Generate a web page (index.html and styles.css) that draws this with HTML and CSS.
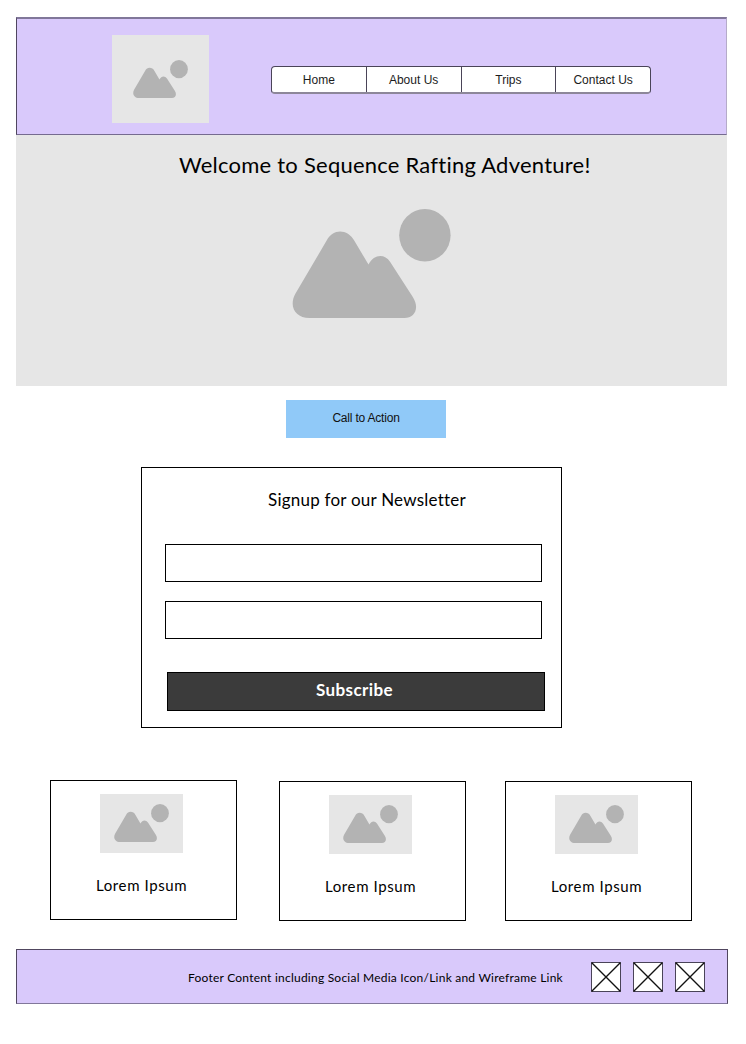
FILE: index.html
```html
<!DOCTYPE html>
<html lang="en">
<head>
<meta charset="utf-8">
<title>Sequence Rafting Adventure</title>
<link rel="stylesheet" href="styles.css">
</head>
<body>
<svg class="defs" aria-hidden="true">
  <symbol id="mountain" viewBox="0 0 159 109" preserveAspectRatio="none">
    <path d="M34.8 31.3C41 19.5 55.5 19.5 62.5 32L76.5 55.6C82 45 92.500 44.500 98.200 53L120.800 88C128 99.500 122.500 109 112.500 109H17.500C3 109-3.500 97 3.500 84.600Z"/>
    <ellipse cx="132.900" cy="26.200" rx="25.700" ry="26.200"/>
  </symbol>
</svg>
<div class="page">
  <header class="header">
    <div class="logo"><svg class="logo-icon"><use href="#mountain"/></svg></div>
    <nav class="nav">
      <a class="nav-item">Home</a>
      <a class="nav-item">About Us</a>
      <a class="nav-item">Trips</a>
      <a class="nav-item">Contact Us</a>
    </nav>
  </header>
  <section class="hero">
    <h1 class="hero-title">Welcome to Sequence Rafting Adventure!</h1>
    <svg class="hero-icon"><use href="#mountain"/></svg>
  </section>
  <a class="cta">Call to Action</a>
  <form class="signup">
    <h2 class="signup-title">Signup for our Newsletter</h2>
    <input class="field" type="text" aria-label="Name">
    <input class="field" type="email" aria-label="Email">
    <button class="subscribe" type="button">Subscribe</button>
  </form>
  <section class="cards">
    <article class="card card-first">
      <div class="thumb"><svg class="thumb-icon"><use href="#mountain"/></svg></div>
      <p class="card-text">Lorem Ipsum</p>
    </article>
    <article class="card">
      <div class="thumb"><svg class="thumb-icon"><use href="#mountain"/></svg></div>
      <p class="card-text">Lorem Ipsum</p>
    </article>
    <article class="card card-last">
      <div class="thumb"><svg class="thumb-icon"><use href="#mountain"/></svg></div>
      <p class="card-text">Lorem Ipsum</p>
    </article>
  </section>
  <footer class="footer">
    <p class="footer-text">Footer Content including Social Media Icon/Link and Wireframe Link</p>
    <div class="socials">
      <svg class="social" viewBox="0 0 30 30"><path class="social-box" d="M.5.5h29v29H.5z"/><path class="social-cross" d="M.5.5l29 29M29.500.5l-29 29"/></svg>
      <svg class="social" viewBox="0 0 30 30"><path class="social-box" d="M.5.5h29v29H.5z"/><path class="social-cross" d="M.5.5l29 29M29.500.5l-29 29"/></svg>
      <svg class="social" viewBox="0 0 30 30"><path class="social-box" d="M.5.5h29v29H.5z"/><path class="social-cross" d="M.5.5l29 29M29.500.5l-29 29"/></svg>
    </div>
  </footer>
</div>
</body>
</html>
```
FILE: styles.css
```css
* { box-sizing: border-box; }
body { margin: 0; background: #fff; color: #000; font-family: Lato, sans-serif; }
h1, h2, p { margin: 0; font-weight: 400; white-space: nowrap; }
.defs { display: block; width: 0; height: 0; }
.page { display: flex; flex-direction: column; width: 746px; height: 1044px; padding: 17px 18px 0 16px; }

.header { display: flex; width: 711px; height: 118px; padding: 16px 0 0 95px; background: #d9c9fb; border: 1px solid #756b8f; border-top: 2px solid #81779a; border-left-color: #50465f; border-right-color: #b5abc9; }
.logo { width: 97px; height: 88px; padding: 25px 0 0 21px; background: #e6e6e6; }
.logo-icon { display: block; width: 55px; height: 38px; fill: #b3b3b3; }
.nav { display: flex; width: 380px; height: 28px; margin: 31px 0 0 62px; background: #fff; border: 1px solid #4a4458; border-bottom: 2px solid #8d8799; border-radius: 4px; }
.nav-item { display: flex; flex: 1; align-items: center; justify-content: center; padding-top: 1px; font: 12px "Liberation Sans", Arial, sans-serif; color: #1c1c1c; border-left: 1px solid #4a4458; }
.nav-item:first-child { border-left: 0; }

.hero { width: 711px; height: 251px; background: #e6e6e6; }
.hero-title { padding: 16px 0 0 163px; font-size: 22px; line-height: 28px; letter-spacing: 0.23px; }
.hero-icon { display: block; width: 159px; height: 109px; margin: 30px 0 0 276px; fill: #b3b3b3; }

.cta { display: flex; justify-content: center; width: 160px; height: 38px; margin: 14px 0 0 270px; padding-top: 11px; background: #90c9f8; color: #111; font: 12px "Liberation Sans", Arial, sans-serif; letter-spacing: -0.2px; }

.signup { display: flex; flex-direction: column; width: 421px; height: 261px; margin: 29px 0 0 125px; padding: 20px 0 0 23px; border: 1px solid #000; }
.signup-title { height: 56px; padding-left: 103px; font-size: 17px; line-height: 24px; letter-spacing: 0.23px; }
.field { width: 377px; height: 38px; margin: 0 0 19px; padding: 0 8px; background: #fff; border: 1px solid #000; border-radius: 0; font: 16px Lato, sans-serif; }
.subscribe { width: 378px; height: 39px; margin: 14px 0 0 2px; padding: 0 3px 4px 0; background: #3b3b3b; border: 1px solid #000; border-radius: 0; color: #fff; font: 700 17px Lato, sans-serif; letter-spacing: 0.4px; }

.cards { display: flex; margin: 52px 0 0 34px; }
.card { width: 187px; height: 140px; margin: 1px 39px 0 0; padding: 13px 0 0 49px; border: 1px solid #000; }
.card-first { margin: 0 42px 0 0; }
.card-last { margin-right: 0; }
.thumb { width: 83px; height: 59px; padding: 10px 0 0 14px; background: #e6e6e6; }
.thumb-icon { display: block; width: 55px; height: 38px; fill: #b3b3b3; }
.card-text { margin: 21px 0 0 -4px; font-size: 15px; line-height: 22px; letter-spacing: 0.6px; }

.footer { display: flex; width: 712px; height: 55px; margin-top: 28px; padding: 12px 0 0 171px; background: #d9c9fb; border: 1px solid #50465f; border-bottom-color: #81779a; }
.footer-text { width: 403px; padding-top: 7px; font-size: 12px; line-height: 18px; letter-spacing: 0.23px; }
.socials { display: flex; gap: 12px; }
.social { display: block; width: 30px; height: 30px; fill: none; }
.social-box { fill: #fff; stroke: #4a4458; }
.social-cross { stroke: #111; stroke-width: 1.400; }
```
